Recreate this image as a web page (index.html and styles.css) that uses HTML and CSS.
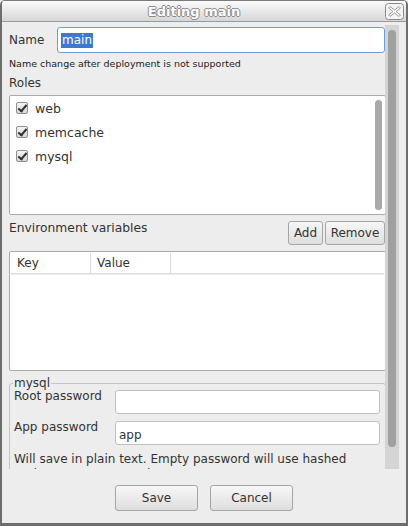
FILE: index.html
```html
<!DOCTYPE html>
<html>
<head>
<meta charset="utf-8">
<link rel="stylesheet" href="styles.css">
</head>
<body>
<div class="window">
  <div class="titlebar">
    <span class="title">Editing main</span>
    <span class="close">
      <svg width="19" height="17" viewBox="0 0 19 17">
        <rect x="0.5" y="0.5" width="18" height="16" rx="3" fill="#f4f4f4" stroke="#8a8a8a"/>
        <path d="M5 3.5 L9.5 7 L14 3.5 L15.5 5 L11 8.5 L15.5 12 L14 13.5 L9.5 10 L5 13.5 L3.5 12 L8 8.5 L3.5 5 Z" fill="#fff" stroke="#9a9a9a" stroke-width="1" stroke-linejoin="round"/>
      </svg>
    </span>
  </div>
  <div class="body">
    <div class="viewport">
      <div class="content">
        <div class="name-row">
          <span class="label">Name</span>
          <div class="input focused"><span class="sel">main</span></div>
        </div>
        <div class="hint">Name change after deployment is not supported</div>
        <div class="section-label">Roles</div>
        <div class="list">
          <div class="items">
            <div class="item"><span class="cb"></span>web</div>
            <div class="item"><span class="cb"></span>memcache</div>
            <div class="item"><span class="cb"></span>mysql</div>
          </div>
          <div class="vscroll"><div class="vthumb"></div></div>
        </div>
        <div class="env-row">
          <span class="env-label">Environment variables</span>
          <div class="btns">
            <span class="btn add">Add</span>
            <span class="btn remove">Remove</span>
          </div>
        </div>
        <div class="table">
          <div class="thead">
            <span class="th c1">Key</span>
            <span class="th c2">Value</span>
            <span class="th c3"></span>
          </div>
        </div>
        <div class="fieldset">
          <span class="legend">mysql</span>
          <div class="frow">
            <span class="flabel">Root password</span>
            <div class="input field"></div>
          </div>
          <div class="frow">
            <span class="flabel">App password</span>
            <div class="input field"><span class="val">app</span></div>
          </div>
          <div class="note">Will save in plain text. Empty password will use hashed<br>project ID as password.</div>
        </div>
      </div>
    </div>
    <div class="outer-scroll"><div class="outer-thumb"></div></div>
  </div>
  <div class="footer">
    <span class="btn big">Save</span>
    <span class="btn big">Cancel</span>
  </div>
</div>
</body>
</html>
```
FILE: styles.css
```css
* { box-sizing: border-box; }
html, body { margin: 0; padding: 0; }
body {
  width: 408px;
  height: 526px;
  overflow: hidden;
  font-family: "DejaVu Sans", sans-serif;
  font-size: 12px;
  color: #333;
  background: #ededed;
}
.window {
  width: 408px;
  height: 526px;
  border-left: 2px solid #6e6e6e;
  border-right: 2px solid #6e6e6e;
  border-bottom: 3px solid #6e6e6e;
  border-radius: 5px 5px 0 0;
  background: #ededed;
  display: flex;
  flex-direction: column;
  overflow: hidden;
}
.titlebar {
  height: 22px;
  flex: none;
  background: linear-gradient(#fbfbfb, #d6d6d6);
  border-bottom: 1px solid #9a9a9a;
  border-top: 1px solid #7a7a7a;
  display: flex;
  align-items: center;
  justify-content: center;
  position: relative;
}
.title {
  font-weight: bold;
  font-size: 13px;
  color: #fff;
  text-shadow: 1px 0 0 #8a8a8a, -1px 0 0 #8a8a8a, 0 1px 0 #8a8a8a, 0 -1px 0 #8a8a8a;
  margin-right: 20px;
}
.close {
  position: absolute;
  right: 2px;
  top: 2px;
  width: 19px;
  height: 17px;
  display: block;
}
.close svg { display: block; }
.body {
  height: 447px;
  flex: none;
  display: flex;
}
.viewport {
  width: 383px;
  height: 447px;
  overflow: hidden;
  flex: none;
}
.content {
  padding: 5px 0 0 7px;
}
.name-row {
  display: flex;
  align-items: center;
  height: 26px;
}
.label { width: 48px; }
.input {
  background: #fff;
  border: 1px solid #b5b5b5;
  border-radius: 3px;
  height: 26px;
  display: flex;
  align-items: center;
  padding-left: 3px;
}
.input.focused {
  width: 328px;
  border-color: #6d9ce0;
}
.sel {
  background: #3b79d4;
  color: #fff;
  padding: 0 1px;
  line-height: 15px;
  margin-top: 1px;
}
.hint {
  font-size: 9.5px;
  margin-top: 4px;
  height: 13px;
  line-height: 13px;
  color: #222;
}
.section-label {
  margin-top: 5px;
  height: 16px;
  line-height: 16px;
}
.list {
  margin-top: 4px;
  width: 377px;
  height: 120px;
  background: #fff;
  border: 1px solid #aaa;
  border-radius: 2px;
  display: flex;
}
.items {
  flex: 1;
  padding: 0 0 0 6px;
}
.item {
  display: flex;
  align-items: center;
  height: 24px;
  font-size: 12.5px;
}
.cb {
  width: 12px;
  height: 12px;
  border: 1px solid #8f8f8f;
  border-radius: 2px;
  background: linear-gradient(#f4f4f4, #d4d4d4);
  margin-right: 7px;
  position: relative;
}
.cb::after {
  content: "";
  position: absolute;
  left: 3px;
  top: 0px;
  width: 3px;
  height: 7px;
  border-right: 2px solid #2e2e2e;
  border-bottom: 2px solid #2e2e2e;
  transform: rotate(40deg);
}
.vscroll {
  width: 12px;
  padding: 4px 3px 4px 2px;
}
.vthumb {
  width: 7px;
  height: 100%;
  background: #a9a9a9;
  border-radius: 4px;
}
.env-row {
  display: flex;
  justify-content: space-between;
  width: 376px;
  margin-top: 6px;
  height: 24px;
}
.env-label {
  margin-top: 0;
  line-height: 14px;
  font-size: 12.3px;
}
.btns {
  display: flex;
  gap: 2px;
}
.btn {
  border: 1px solid #a6a6a6;
  border-radius: 3px;
  background: linear-gradient(#f7f7f7, #dedede);
  display: flex;
  align-items: center;
  justify-content: center;
  color: #333;
}
.btn.add { height: 24px; width: 35px; }
.btn.remove { height: 24px; width: 60px; }
.table {
  margin-top: 6px;
  width: 377px;
  height: 120px;
  background: #fff;
  border: 1px solid #aaa;
  border-radius: 2px;
  padding: 1px 1px 0 1px;
}
.thead {
  display: flex;
  height: 21px;
  border-bottom: 1px solid #dadada;
  box-shadow: 0 1px 0 #efefef;
}
.th {
  height: 20px;
  line-height: 20px;
  padding-left: 6px;
  border-right: 1px solid #dcdcdc;
}
.th.c1 { width: 80px; }
.th.c2 { width: 80px; }
.th.c3 { flex: 1; border-right: none; }
.fieldset {
  margin-top: 12px;
  width: 377px;
  border: 1px solid #c4c4c4;
  border-radius: 3px;
  padding: 0 5px 10px 4px;
  position: relative;
}
.legend {
  position: absolute;
  left: 3px;
  top: -8px;
  background: #ededed;
  padding: 0 1px;
  line-height: 15px;
}
.frow {
  display: flex;
  margin-top: 6px;
  height: 24px;
}
.frow + .frow { margin-top: 7px; }
.flabel {
  width: 101px;
  line-height: 14px;
  margin-top: -1px;
}
.input.field {
  width: 265px;
  height: 24px;
  border: 1px solid #c0c0c0;
}
.val { margin-top: 4px; }
.note {
  margin-top: 7px;
  line-height: 15px;
}
.outer-scroll {
  width: 14px;
  margin-top: 3px;
  height: 444px;
  background: #d4d4d4;
  padding: 5px 3px 22px 3px;
}
.outer-thumb {
  width: 8px;
  height: 100%;
  background: #a0a0a0;
  border-radius: 4px;
}
.footer {
  flex: 1;
  display: flex;
  justify-content: center;
  gap: 12px;
  padding-top: 16px;
}
.btn.big {
  width: 83px;
  height: 26px;
}
```
